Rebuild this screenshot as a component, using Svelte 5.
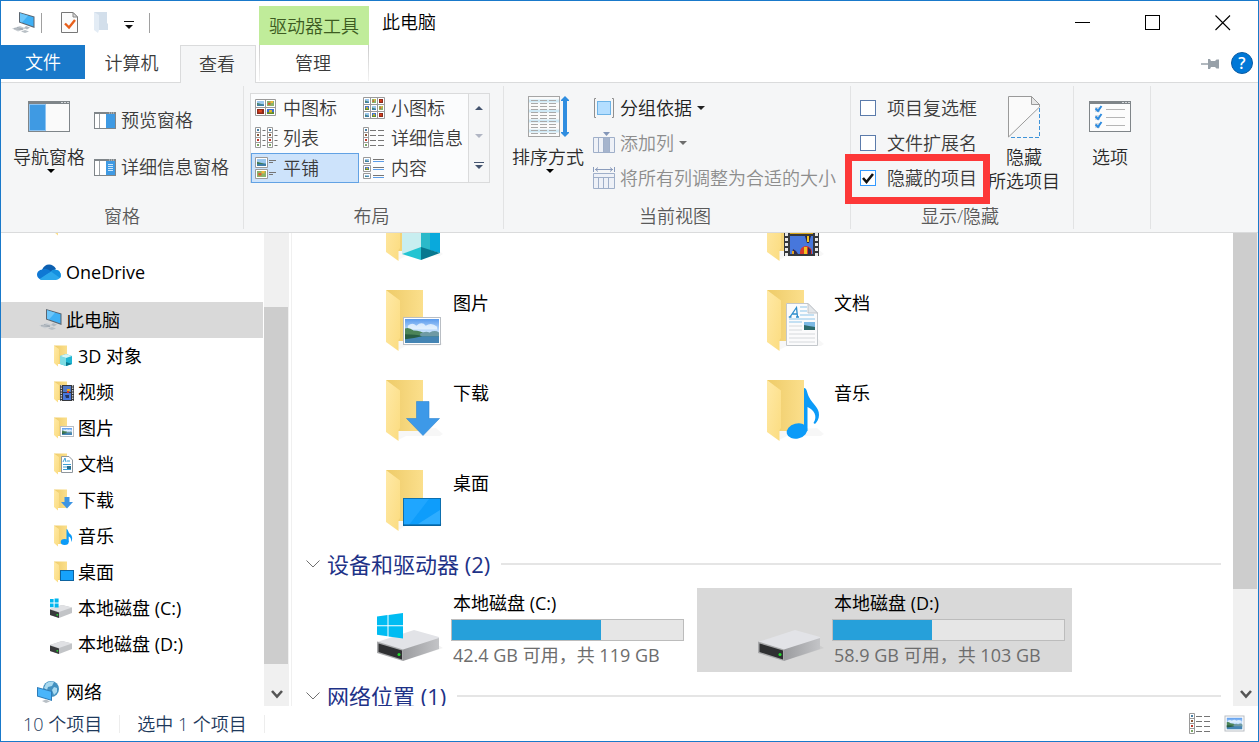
<script>
  const layouts = [
    { name: '中图标', kind: 'medium' },
    { name: '小图标', kind: 'small' },
    { name: '列表', kind: 'list' },
    { name: '详细信息', kind: 'details' },
    { name: '平铺', kind: 'tiles' },
    { name: '内容', kind: 'content' }
  ];
  let layout = $state('tiles');

  let options = $state([
    { name: '项目复选框', on: false },
    { name: '文件扩展名', on: false },
    { name: '隐藏的项目', on: true }
  ]);

  const places = [
    { name: '3D 对象', kind: 'cube' },
    { name: '视频', kind: 'video' },
    { name: '图片', kind: 'picture' },
    { name: '文档', kind: 'document' },
    { name: '下载', kind: 'download' },
    { name: '音乐', kind: 'music' },
    { name: '桌面', kind: 'desktop' },
    { name: '本地磁盘 (C:)', kind: 'system' },
    { name: '本地磁盘 (D:)', kind: 'drive' }
  ];

  const folders = [
    { name: '图片', kind: 'picture' },
    { name: '文档', kind: 'document' },
    { name: '下载', kind: 'download' },
    { name: '音乐', kind: 'music' },
    { name: '桌面', kind: 'desktop' }
  ];

  const drives = [
    { name: '本地磁盘 (C:)', free: 42.4, total: 119, system: true, selected: false },
    { name: '本地磁盘 (D:)', free: 58.9, total: 103, system: false, selected: true }
  ];
</script>

{#snippet thumb(x, y, w, h, v)}
  {#if v === 1}
    <rect {x} {y} width={w} height={h} fill="#8b2a1c" /><rect x={x + w * 0.2} y={y + h * 0.2} width={w * 0.5} height={h * 0.5} fill="#e0431f" />
  {:else if v === 2}
    <rect {x} {y} width={w} height={h} fill="#8bb36a" /><rect x={x + w * 0.15} y={y + h * 0.35} width={w * 0.35} height={h * 0.4} fill="#e05a2b" /><rect x={x + w * 0.5} y={y} width={w * 0.35} height={h * 0.4} fill="#f0b83c" />
  {:else if v === 3}
    <rect {x} {y} width={w} height={h} fill="#3c6fd0" /><rect {x} y={y + h * 0.6} width={w} height={h * 0.4} fill="#5c8c2c" /><rect x={x + w * 0.3} y={y + h * 0.2} width={w * 0.4} height={h * 0.5} fill="#e8b820" />
  {:else}
    <rect {x} {y} width={w} height={h} fill="#9cc8ef" /><rect {x} y={y + h * 0.65} width={w} height={h * 0.35} fill="#3f7fa8" /><path d="M{x} {y + h * 0.4}L{x + w * 0.9} {y + h * 0.7}H{x}z" fill="#3f7a52" />
  {/if}
{/snippet}

{#snippet computer()}
  <svg width="24" height="22" viewBox="0 0 24 22" aria-hidden="true">
    <path d="M7 0L22.500 4.500V16L7 10.500z" fill="#5b6570" />
    <path d="M8 1.300L21.500 5.300V14.600L8 9.700z" fill="#3fb0f5" />
    <path d="M8 1.300L16 3.700L10 10.400L8 9.700z" fill="#6cc6fa" />
    <path d="M14 14l4 1.500-3 2-3-1.500z" fill="#b3bac0" />
    <path d="M0 16.500L8 14l6 2.500-8 3z" fill="#c9ced3" />
    <path d="M2 16.700l9 1M5 15.500l6 1.500" stroke="#98a1a9" stroke-width=".8" fill="none" />
    <path d="M9 19.500l4-1.500 4 1.500-4 1.500z" fill="#b9c0c6" />
  </svg>
{/snippet}

{#snippet landscape(x, y, w, h)}
  <rect {x} {y} width={w} height={h} fill="#fff" stroke="#b9bec4" />
  <svg x={x + 1.500} y={y + 1.500} width={w - 3} height={h - 3} viewBox="0 0 36 25" preserveAspectRatio="none">
    <rect width="36" height="25" fill="url(#sky)" />
    <path d="M3 7q5-4 9 0q6-5 10 0q6-4 12 1v3H3z" fill="#eef7ff" opacity=".8" />
    <path d="M0 10q4-2 9 2q8 0 13 4l14-1v4H0z" fill="#4c8458" />
    <path d="M16 15q6-3 10-1q6-3 10 0v4H16z" fill="#6f9aa4" />
    <rect y="18" width="36" height="7" fill="#4585b4" />
    <path d="M0 16q12 0 18 2q-8 2-18 3z" fill="#285d43" />
  </svg>
{/snippet}

{#snippet driveShape(system)}
  <path d="M40 69L67 60L62 57z" fill="#000" opacity=".05" />
  <path d="M1 54L38 42L63 49L63 51L27 62z" fill="#e2e3e7" />
  <path d="M27 61.500L63 50V61L27 73z" fill="url(#side)" />
  <path d="M1 53.500L27 61.500V73L1 65z" fill="#a8a9ab" />
  <path d="M2.500 55.500L26 62.500V71.500L2.500 64z" fill="#2f3032" />
  <circle cx="23" cy="66.500" r="1.500" fill="#22dd2e" />
  {#if system}
    <path d="M1 28.600L11.500 27V37.200H1zM12.500 26.900L27 25V37.200H12.500zM1 38.200H11.500V48.200L1 46.800zM12.500 38.200H27V50.500L12.500 48.400z" fill="#00bcf2" />
  {/if}
{/snippet}

{#snippet bigIcon(kind)}
  <svg class="big-icon" width="70" height="84" viewBox="0 0 70 84" aria-hidden="true">
    {#if kind === 'system' || kind === 'drive'}
      {@render driveShape(kind === 'system')}
    {:else}
      <path d="M22 62L30 58H64L67 56L60 50L22 52z" fill="#000" opacity=".03" />
      <path d="M10 2H47V53H22z" fill="url(#back)" />
      <path d="M10 2L24 12.500V50L22.500 52V63L10 54z" fill="url(#flap)" />
      {#if kind === 'picture'}
        {@render landscape(27.500, 29.500, 37, 27)}
      {:else if kind === 'document'}
        <path d="M29.500 15.500H51L60.500 25V57.500H29.500z" fill="#fbfbfc" stroke="#c3c7cb" />
        <path d="M51 15.500V25H60.500z" fill="#e4e7ea" stroke="#b8bdc2" stroke-width=".8" />
        <path d="M33 29L39.500 19.500L40.500 29M35.500 26H40.200M31.800 29H34.500M39 29H42" stroke="#2d8dcc" fill="none" stroke-width="1.300" />
        <path d="M43 19H50M43 23H50M43 27H57M32 31H58M32 34H45" stroke="#8dc5ea" />
        <path d="M32 38H45M32 42H45M32 46H58M32 50H58M32 54H58" stroke="#d6d9dc" />
        <rect x="47" y="34" width="11" height="8" fill="#7cb9e4" /><path d="M47 37l5 1 6 1v3H47z" fill="#2d6b6d" />
      {:else if kind === 'download'}
        <path d="M40.500 23.500H53V40.500H63.500L47 57.500L30.500 40.500H40.500z" fill="#3d99e8" stroke="#2f86d4" stroke-width=".6" />
      {:else if kind === 'music'}
        <ellipse cx="40" cy="53" rx="10.500" ry="7.500" transform="rotate(-15 40 53)" fill="#0c9bf8" />
        <path d="M47 10C50 10 50 15 52 19C56 27 62 29 62 37C62 41 60 44 58 46L56.500 45C61 38 57 32 50.500 29V53H47z" fill="#0c9bf8" />
      {:else if kind === 'desktop'}
        <rect x="27.500" y="30.500" width="37" height="27" fill="#0e9dfb" stroke="#0d6fae" />
        <path d="M28 31H53L33 57H28z" fill="#1fa6ff" /><path d="M64 42V56H42z" fill="#2eadff" />
        <path d="M27 57H65" stroke="#075a92" />
      {:else if kind === 'cube'}
        <path d="M26 35L45 30V50L26 56z" fill="#c8eef0" /><path d="M45 30L64 35V55L45 50z" fill="#09a9dc" />
        <path d="M45 30L54 32V52L45 50z" fill="#2bb9c9" />
        <path d="M26 56L45 49V62z" fill="#22c4d2" /><path d="M45 49L64 55L45 62z" fill="#08788f" />
      {:else if kind === 'video'}
        <rect x="27" y="20" width="35" height="38" fill="#36383c" />
        <rect x="33" y="20" width="23" height="16" fill="#187548" /><rect x="33" y="38" width="23" height="18" fill="#4777dc" />
        <path d="M33 33h23v3H33z" fill="#d8a719" />
        <path d="M29.500 20V58M59.500 20V58" stroke="#e8e8e8" stroke-width="3" stroke-dasharray="3 2" />
        <path d="M48 38h6l-2 7h-2z" fill="#27233f" /><path d="M50 38h2v6h-2z" fill="#f2c521" />
        <path d="M43 54a6 6 0 0 1 12 0v2H43z" fill="#d93a2b" /><path d="M47 49h3v7h-3z" fill="#f2c521" /><path d="M51 49l3 3v4h-3z" fill="#302b52" />
        <path d="M36 51l3 2 2 3h-6z" fill="#302b52" /><path d="M35 53h2v3h-2z" fill="#e2a521" />
      {/if}
    {/if}
  </svg>
{/snippet}

{#snippet treeIcon(kind)}
  <svg width="26" height="24" viewBox="0 0 26 24" aria-hidden="true">
    {#if kind === 'system' || kind === 'drive'}
      <path d="M1 13L13 9L23 11.500V17L10 22L1 19z" fill="#c2c4c7" />
      <path d="M1 13L13 9L23 11.500L10 16z" fill="#e0e1e4" />
      <path d="M1 13.500L10 16.500V22L1 19z" fill="#38393b" />
      <circle cx="8.300" cy="18.800" r=".9" fill="#22dd2e" />
      {#if kind === 'system'}
        <path d="M1 3H4.600V6.600H1zM5.600 2.600H9.600V6.600H5.600zM1 7.600H4.600V11.200H1zM5.600 7.600H9.600V11.600H5.600z" fill="#00b6ee" />
      {/if}
    {:else}
      <path d="M5 1.500H18V20H9z" fill="url(#back)" />
      <path d="M5 1.500L10 5V19L9 20V22.500L5 19z" fill="url(#flap)" />
      {#if kind === 'picture'}
        {@render landscape(11.500, 10.500, 13, 10)}
      {:else if kind === 'document'}
        <path d="M12.500 4.500H20L23.500 8V20.500H12.500z" fill="#fff" stroke="#8f969c" />
        <path d="M14 10L16 6L17 10M18 9H21M14 12.500H22M14 15H18M14 17.500H22" stroke="#3d9fd6" fill="none" /><rect x="18" y="14" width="4" height="3" fill="#276e8f" />
      {:else if kind === 'download'}
        <path d="M15.500 9H20.500V14H24L18 20.500L12 14H15.500z" fill="#3d95e4" />
      {:else if kind === 'music'}
        <ellipse cx="15.700" cy="18" rx="4" ry="3" fill="#0c9bf8" />
        <path d="M17.500 5C19 5 19 8 21 10C24 12 23.500 16 22 18C22.500 14 21 13 19.700 12.500V18H17.500z" fill="#0c9bf8" />
      {:else if kind === 'desktop'}
        <rect x="11.500" y="10.500" width="13" height="10" fill="#16a2fb" stroke="#0d639f" />
      {:else if kind === 'cube'}
        <path d="M11 12L17 10L23 12V20L17 22L11 20z" fill="#1fb6d3" /><path d="M11 12L17 14V22L11 20z" fill="#7edce3" /><path d="M11 12L17 10L23 12L17 14z" fill="#d6f5f5" /><path d="M17 18L23 20L17 22z" fill="#08788f" />
      {:else if kind === 'video'}
        <rect x="11" y="5" width="14" height="16" fill="#36383c" /><rect x="14" y="6" width="8" height="6" fill="#4f79c9" /><rect x="14" y="13" width="8" height="7" fill="#4777dc" />
        <path d="M12.300 5V21M23.700 5V21" stroke="#d8d8d8" stroke-dasharray="1.500 1" stroke-width="1.200" /><path d="M18 9h3v2h-3z" fill="#e2a521" /><path d="M16 15h4v3h-3z" fill="#27355e" /><path d="M18 11h2v2h-2z" fill="#c33" />
      {/if}
    {/if}
  </svg>
{/snippet}

{#snippet layoutIcon(kind)}
  <svg width="23" height="22" viewBox="0 0 23 22" aria-hidden="true">
    {#if kind === 'medium'}
      <path d="M.5 2.500H20.500V18.500H.5zM.5 10.500H20.500M10.500 2.500V18.500" fill="#fff" stroke="#9a9a9a" />
      {@render thumb(2, 4, 7, 5, 0)}{@render thumb(12, 4, 7, 5, 2)}{@render thumb(2, 12, 7, 5, 1)}{@render thumb(12, 12, 7, 5, 3)}
    {:else if kind === 'small'}
      <path d="M.5 .5H21.500V21.500H.5zM.5 7.500H21.500M.5 14.500H21.500M7.500 .5V21.500M14.500 .5V21.500" fill="#fff" stroke="#9a9a9a" />
      {#each [0, 1, 2, 3, 4, 5, 6, 7, 8] as n}
        {@render thumb(2 + (n % 3) * 7, 2 + Math.floor(n / 3) * 7, 4, 4, [0, 2, 1, 3, 0, 2, 0, 3, 1][n])}
      {/each}
    {:else if kind === 'list' || kind === 'details'}
      {#each kind === 'list' ? [0, 12] : [0] as x}
        <path d="M{x + 0.5} .5h5v20h-5zM{x + 0.5} 5.500h5M{x + 0.5} 10.500h5M{x + 0.5} 15.500h5" fill="#fff" stroke="#9a9a9a" />
        {#each ['#4a7fa5', '#8a5a3c', '#c0392b', '#7ba564'] as fill, i}
          <rect x={x + 2} y={2 + i * 5} width="2" height="2" {fill} />
        {/each}
      {/each}
      {#if kind === 'list'}
        <path d="M7.500 3.500H10.500M7.500 8.500H10.500M7.500 13.500H10.500M7.500 18.500H10.500M19.500 3.500H22.500M19.500 8.500H22.500M19.500 13.500H22.500M19.500 18.500H22.500" stroke="#757575" />
      {:else}
        <path d="M7 3.500H13M15 3.500H21M7 8.500H13M15 8.500H21M7 13.500H13M15 13.500H21M7 18.500H13M15 18.500H21" stroke="#757575" />
      {/if}
    {:else if kind === 'tiles'}
      <path d="M.5 .5H12.500V10.500H.5zM.5 12.500H12.500V21.500H.5z" fill="#fff" stroke="#9a9a9a" />
      {@render thumb(2, 2, 9, 7, 0)}{@render thumb(2, 14, 9, 6, 2)}
      <path d="M14 3.500H21M14 5.500H18M14 15.500H21M14 17.500H18" stroke="#757575" />
    {:else}
      <path d="M.5 .5H7.500V6.500H.5zM.5 8.500H7.500V14.500H.5zM.5 16.500H7.500V21.500H.5z" fill="#fff" stroke="#9a9a9a" />
      {@render thumb(2, 2, 4, 3, 0)}{@render thumb(2, 10, 4, 3, 3)}{@render thumb(2, 18, 4, 2, 0)}
      <path d="M10 2.500H21M10 10.500H21M10 18.500H21" stroke="#757575" /><path d="M10 4.500H21M10 12.500H21M10 20.500H21" stroke="#5c9de8" />
    {/if}
  </svg>
{/snippet}

{#snippet caret()}
  <svg class="caret" width="8" height="4" viewBox="0 0 8 4" aria-hidden="true"><path d="M0 0H8L4 4z" fill="currentColor" /></svg>
{/snippet}

{#snippet paneIcon(lines)}
  <svg width="22" height="17" viewBox="0 0 22 17" aria-hidden="true">
    <rect x=".5" y=".5" width="21" height="16" fill="#fff" stroke="#7f8589" />
    <path d="M0 1H22" stroke="#7f8589" stroke-width="2" /><path d="M15 1H20" stroke="#d5d8da" stroke-dasharray="1 1" />
    <path d="M5.500 2V16" stroke="#9ba0a4" /><rect x="12" y="2" width="9" height="14" fill="#3f9ae3" />
    {#if lines}<path d="M14 5.500H19M14 7.500H19M14 9.500H19M14 11.500H19" stroke="#cbe5fa" />{/if}
  </svg>
{/snippet}

{#snippet scrollArrow()}
  <svg width="12" height="9" viewBox="0 0 12 9" aria-hidden="true"><path d="M1 1L6 6.500L11 1" fill="none" stroke="#555" stroke-width="2.600" /></svg>
{/snippet}

<svg class="defs" width="0" height="0" aria-hidden="true">
  <defs>
    <linearGradient id="back"><stop offset="0" stop-color="#eecb68" /><stop offset="1" stop-color="#fbdf8c" /></linearGradient>
    <linearGradient id="flap" x2="1" y2="1"><stop offset="0" stop-color="#ffe9a6" /><stop offset="1" stop-color="#fbdc80" /></linearGradient>
    <linearGradient id="side"><stop offset="0" stop-color="#9b9c9f" /><stop offset="1" stop-color="#c3c4c7" /></linearGradient>
    <linearGradient id="sky" x2="0" y2="1"><stop offset="0" stop-color="#5a9bed" /><stop offset=".6" stop-color="#d5ebff" /></linearGradient>
  </defs>
</svg>

<div class="window">
  <header>
    <div class="titlebar">
      <div class="quick">
        {@render computer()}
        <i class="bar"></i>
        <button class="q-check" aria-label="属性">
          <svg width="18" height="22" viewBox="0 0 18 22"><path d="M.5 .5H12L16.500 5V20.500H.5z" fill="#fcfcfc" stroke="#777" /><path d="M12 .5V5H16.500z" fill="#ddd" stroke="#888" /><path d="M4 11.500L8 15.500L14 8" fill="none" stroke="#e8601c" stroke-width="2.400" /></svg>
        </button>
        <button class="q-folder" aria-label="新建文件夹">
          <svg width="15" height="22" viewBox="0 0 15 22"><path d="M0 0H13V11L14 12V18H4z" fill="#d3dfeb" /><path d="M0 0L5 3V18L4 21L0 18z" fill="#e3ecf5" /></svg>
        </button>
        <button class="q-more" aria-label="自定义快速访问工具栏">
          <svg width="10" height="8" viewBox="0 0 10 8"><path d="M0 .5H10" stroke="#111" /><path d="M1 4H9L5 8z" fill="#111" /></svg>
        </button>
        <i class="bar"></i>
      </div>
      <div class="context">驱动器工具</div>
      <h1>此电脑</h1>
      <button class="win" aria-label="最小化"><svg width="16" height="16" viewBox="0 0 16 16"><path d="M0 7.500H15" stroke="#000" /></svg></button>
      <button class="win" aria-label="最大化"><svg width="16" height="16" viewBox="0 0 16 16"><rect x=".5" y=".5" width="14" height="14" fill="none" stroke="#000" /></svg></button>
      <button class="win" aria-label="关闭"><svg width="16" height="16" viewBox="0 0 16 16"><path d="M.5 .5L15 15M15 .5L.5 15" stroke="#000" stroke-width="1.100" /></svg></button>
    </div>
    <nav class="tabs">
      <button class="file">文件</button>
      <button class="tab">计算机</button>
      <button class="tab active">查看</button>
      <button class="tab manage">管理</button>
      <span class="grow"></span>
      <button class="pin" aria-label="固定功能区"><svg width="18" height="12" viewBox="0 0 18 12"><path d="M0 6H7" stroke="#97a0a8" stroke-width="1.500" /><path d="M7 1H9L10 3H14L15.500 1.500H18V10.500H15.500L14 9H10L9 11H7z" fill="#97a0a8" /></svg></button>
      <button class="help" aria-label="帮助">?</button>
    </nav>
  </header>

  <section class="ribbon">
    <div class="group panes">
      <div class="tools">
        <button class="large">
          <svg width="42" height="31" viewBox="0 0 42 31" aria-hidden="true"><rect x=".5" y=".5" width="41" height="30" fill="#fafafa" stroke="#7f8589" /><path d="M0 1.500H42" stroke="#7f8589" stroke-width="3" /><path d="M33 1.500H41" stroke="#d5d8da" stroke-dasharray="2 1" /><rect x="1" y="3" width="17" height="27" fill="#8cc3f2" /><rect x="2" y="4" width="15" height="25" fill="#3f9ae3" /></svg>
          <span>导航窗格</span>
          {@render caret()}
        </button>
        <div class="stack wide-gap">
          <button class="small">{@render paneIcon(false)}<span>预览窗格</span></button>
          <button class="small">{@render paneIcon(true)}<span>详细信息窗格</span></button>
        </div>
      </div>
      <h2>窗格</h2>
    </div>

    <div class="group layout">
      <div class="tools">
        <div class="gallery">
          <div class="cells">
            {#each layouts as item}
              <button class="cell" class:chosen={layout === item.kind} onclick={() => (layout = item.kind)}>
                {@render layoutIcon(item.kind)}<span>{item.name}</span>
              </button>
            {/each}
          </div>
          <div class="spin">
            <button aria-label="上一行"><svg width="8" height="4" viewBox="0 0 8 4"><path d="M4 0L8 4H0z" fill="#44546f" /></svg></button>
            <button aria-label="下一行"><svg width="8" height="4" viewBox="0 0 8 4"><path d="M0 0H8L4 4z" fill="#b1b6c4" /></svg></button>
            <button aria-label="更多"><svg width="10" height="8" viewBox="0 0 10 8"><path d="M0 .5H10" stroke="#44546f" /><path d="M1 3H9L5 7z" fill="#44546f" /></svg></button>
          </div>
        </div>
      </div>
      <h2>布局</h2>
    </div>

    <div class="group view">
      <div class="tools">
        <button class="large tall">
          <svg width="41" height="42" viewBox="0 0 41 42" aria-hidden="true">
            <rect x=".5" y=".5" width="31" height="40" fill="#fafafa" stroke="#a5a5a5" />
            <path d="M1 5H31M1 15H31M1 25H31M1 35H31" stroke="#cfe9f6" stroke-width="3" />
            <path d="M3 4.500H29M3 7.500H29M3 10.500H29M3 13.500H29M3 16.500H29M3 19.500H29M3 22.500H29M3 25.500H29M3 28.500H29M3 31.500H29M3 34.500H29M3 37.500H29" stroke="#a9a9a9" stroke-dasharray="7 2" />
            <path d="M37 0L41 4V5H39V36H41V37L37 41L33 37V36H35V5H33V4z" fill="#2f8de0" />
          </svg>
          <span>排序方式</span>
          {@render caret()}
        </button>
        <div class="stack">
          <button class="small dark">
            <svg width="22" height="20" viewBox="0 0 22 20" aria-hidden="true"><path d="M3 .5H1.500V19.500H3M19 .5H20.500V19.500H19" fill="none" stroke="#8f8f8f" /><rect x="4.500" y="3.500" width="13" height="13" fill="#b4deff" stroke="#6db3e6" /></svg>
            <span>分组依据</span>{@render caret()}
          </button>
          <button class="small" disabled>
            <svg width="22" height="22" viewBox="0 0 22 22" aria-hidden="true"><path d="M.5 5.500H21.500V20.500H.5zM5.500 5.500V20.500M10.500 5.500V20.500M16.500 5.500V20.500" fill="#eef1f7" stroke="#9fafc9" /><rect x="11" y="6" width="5" height="14" fill="#a5b4cd" /><path d="M10 0H17L13.500 4z" fill="#8396b8" /></svg>
            <span>添加列</span>{@render caret()}
          </button>
          <button class="small" disabled>
            <svg width="22" height="22" viewBox="0 0 22 22" aria-hidden="true"><path d="M.5 0V5M21.500 0V5M2 2.500H20M5 .5L2.500 2.500L5 4.500M17 .5L19.500 2.500L17 4.500" fill="none" stroke="#8a9cbc" /><path d="M.5 6.500H21.500V21.500H.5zM.5 10.500H21.500M5.500 10.500V21.500M10.500 10.500V21.500M15.500 10.500V21.500" fill="#eef1f7" stroke="#9fafc9" /></svg>
            <span>将所有列调整为合适的大小</span>
          </button>
        </div>
      </div>
      <h2>当前视图</h2>
    </div>

    <div class="group visibility">
      <div class="tools">
        <div class="stack checks">
          {#each options as option, i}
            <label class:marked={i === 2}>
              <span class="box">
                <input type="checkbox" bind:checked={option.on} />
                {#if option.on}<svg width="12" height="11" viewBox="0 0 12 11" aria-hidden="true"><path d="M1 5L4.500 9L11 1" fill="none" stroke="#111" stroke-width="2.600" /></svg>{/if}
              </span>
              {option.name}
            </label>
          {/each}
        </div>
        <button class="large tall">
          <svg width="33" height="42" viewBox="0 0 33 42" aria-hidden="true"><path d="M.5 .5H23.500L31.500 8.500V11L.5 41z" fill="#fafafa" stroke="#9a9a9a" /><path d="M23.500 .5V8.500H31.500z" fill="#e6e6e6" stroke="#9a9a9a" /><path d="M31.500 12V41.500H1" fill="none" stroke="#3f93d8" stroke-dasharray="4 2" /></svg>
          <span>隐藏<br />所选项目</span>
        </button>
      </div>
      <h2>显示/隐藏</h2>
    </div>

    <div class="group settings">
      <div class="tools">
        <button class="large">
          <svg width="42" height="31" viewBox="0 0 42 31" aria-hidden="true"><rect x=".5" y=".5" width="41" height="30" fill="#fcfcfc" stroke="#7f8589" /><path d="M0 1.500H42" stroke="#7f8589" stroke-width="3" /><path d="M33 1.500H41" stroke="#d5d8da" stroke-dasharray="2 1" /><path d="M17 8.500H36M17 16.500H36M17 24.500H36" stroke="#b5b5b5" /><path d="M6 6H11V11H6zM6 14H11V19H6zM6 22H11V27H6z" fill="#d5dbe1" /><path d="M6.500 7.500L9 10L12.500 5M6.500 15.500L9 18L12.500 13M6.500 23.500L9 26L12.500 21" stroke="#2c8be0" stroke-width="2" fill="none" /></svg>
          <span>选项</span>
        </button>
      </div>
    </div>
  </section>

  <div class="body">
    <aside>
      <div class="tree">
        <div class="node child cut">{@render treeIcon('folder')}</div>
        <a class="node root" href="#onedrive">
          <svg width="24" height="17" viewBox="0 0 24 17" aria-hidden="true"><path d="M5 6C7-1 16-1.500 19 5L12 10z" fill="#0c5fb0" /><path d="M5.500 5.500C8 4 11 5 14 7.500L4 15.500C-2 14-1 6 5.500 5.500z" fill="#0f78d4" /><path d="M14 7.500C16 5 22 5 23.500 9.500C25 13 22 16 19 16H5C4 16 3 15.500 2.500 15z" fill="#2ba7ec" /><path d="M14 7.500C16 5 22 5 23.500 9.500C24 11 24 13 23 14z" fill="#1590df" /></svg>
          OneDrive
        </a>
        <a class="node root current" href="#pc">{@render computer()}此电脑</a>
        {#each places as place}
          <a class="node child" href="#{place.kind}">{@render treeIcon(place.kind)}{place.name}</a>
        {/each}
        <a class="node root" href="#network">
          <svg width="24" height="22" viewBox="0 0 24 22" aria-hidden="true"><circle cx="14" cy="8" r="8" fill="#4391c0" /><path d="M9 2.500q4-3 8-1.500l-2 4-4 1-1 3-3-2zM17 6l3 1v4l-3 3-2-5z" fill="#a9d9ef" /><path d="M0 6L15 10V20L0 15.500z" fill="#2d7cb8" /><path d="M1 7.300L14 10.800V18.700L1 14.700z" fill="#49b5fb" /><path d="M5 20l4-1.500 4 2-4 1.500z" fill="#b8bfc5" /></svg>
          网络
        </a>
      </div>
      <div class="track side"><div class="thumb"></div><div class="end">{@render scrollArrow()}</div></div>
    </aside>

    <main>
      <div class="content">
        <div class="grid clipped">
          <div class="tile">{@render bigIcon('cube')}</div>
          <div class="tile">{@render bigIcon('video')}</div>
        </div>
        <div class="grid">
          {#each folders as folder}
            <div class="tile">{@render bigIcon(folder.kind)}<div class="info"><p>{folder.name}</p></div></div>
          {/each}
        </div>
        <h3><svg width="14" height="8" viewBox="0 0 14 8" aria-hidden="true"><path d="M.5 .5L7 7L13.500 .5" fill="none" stroke="#707070" /></svg>设备和驱动器 (2)</h3>
        <div class="grid">
          {#each drives as drive}
            <div class="tile" class:selected={drive.selected}>
              {@render bigIcon(drive.system ? 'system' : 'drive')}
              <div class="info">
                <p>{drive.name}</p>
                <div class="usage"><div style:width="{(1 - drive.free / drive.total) * 100}%"></div></div>
                <p class="free">{drive.free} GB 可用，共 {drive.total} GB</p>
              </div>
            </div>
          {/each}
        </div>
        <h3 class="later"><svg width="14" height="8" viewBox="0 0 14 8" aria-hidden="true"><path d="M.5 .5L7 7L13.500 .5" fill="none" stroke="#707070" /></svg>网络位置 (1)</h3>
      </div>
      <div class="track main"><div class="thumb"></div><div class="end">{@render scrollArrow()}</div></div>
    </main>
  </div>

  <footer>
    <span>10 个项目</span><i></i><span>选中 1 个项目</span><i></i>
    <b class="grow"></b>
    <button aria-label="详细信息视图">{@render layoutIcon('details')}</button>
    <button aria-label="大图标视图"><svg width="22" height="18" viewBox="0 0 22 18">{@render landscape(1, 1, 19, 15)}</svg></button>
  </footer>
</div>

<style>
  :global(body) { margin: 0; }
  .window, .window * { box-sizing: border-box; }
  .window {
    height: 100vh;
    display: flex;
    flex-direction: column;
    border: 1px solid #1979ca;
    background: #fff;
    color: #000;
    font: 400 18px/24px "Open Sans", "Noto Sans CJK SC", sans-serif;
    white-space: nowrap;
    overflow: hidden;
  }
  .defs { position: absolute; }
  svg { display: block; flex: none; }
  button { border: 0; background: none; padding: 0; margin: 0; font: inherit; color: inherit; }
  h1, h2, h3, p { margin: 0; font: inherit; }
  a { color: inherit; text-decoration: none; }
  .grow { flex: 1; }

  header, .ribbon, footer { font-weight: 350; }
  .titlebar { display: flex; height: 44px; }
  .quick { display: flex; align-items: center; width: 258px; padding-left: 11px; }
  .bar { width: 1px; height: 20px; margin-left: 5px; background: #a0a0a0; }
  .q-check { margin-left: 19px; }
  .q-folder { margin-left: 15px; }
  .q-more { margin: 4px 10px 0 15px; }
  .context {
    width: 110px; margin-top: 5px; padding-top: 8px;
    background: #c0ec9a; color: #3d5c22; text-align: center;
  }
  h1 { flex: 1; padding: 9px 0 0 13px; }
  .win { width: 70px; display: grid; place-items: center; }

  .tabs { display: flex; height: 37px; align-items: stretch; color: #3b3b3b; }
  .file { width: 84px; height: 34px; background: #1979ca; color: #fff; }
  .tab { width: 95px; padding: 0 2px 2px 0; }
  .tab.active {
    width: 76px; height: 38px; margin-right: 3px; z-index: 1;
    background: #f5f6f7; border: 1px solid #dadbdc; border-bottom: 0;
  }
  .tab.manage {
    width: 110px; height: 36px; padding-bottom: 0;
    border: solid; border-width: 0 1px;
    border-image: linear-gradient(#c8c8c8, #f4f4f4) 1;
  }
  .pin { margin-right: 12px; }
  .help {
    width: 22px; height: 22px; margin: 7px 5px 0 0; border-radius: 50%;
    background: #0078d7; border: 1px solid #0b5ba3; color: #fff;
    font-size: 16px; line-height: 20px; font-weight: 600;
  }

  .ribbon {
    display: flex; height: 151px; flex: none; padding: 3px 0;
    background: #f5f6f7; border: solid #dadbdc; border-width: 1px 0;
    color: #3b3b3b;
  }
  .group { display: flex; flex-direction: column; border-right: 1px solid #e2e3e4; }
  .tools { display: flex; height: 118px; }
  h2 { text-align: center; color: #5a5a5a; padding-right: 4px; }
  .panes h2 { padding: 0; }
  .large { display: flex; flex-direction: column; align-items: center; padding-top: 15px; color: #2b2b2b; }
  .large svg { margin-bottom: 13px; }
  .large.tall { padding-top: 10px; }
  .large.tall svg { margin-bottom: 7px; }
  .large .caret, .large.tall .caret { margin: 0 0 0 4px; color: #000; }
  .stack { display: flex; flex-direction: column; padding-top: 10px; gap: 11px; }
  .stack.wide-gap { padding-top: 22px; gap: 23px; }
  .small { display: flex; align-items: center; gap: 5px; height: 24px; }
  .small.dark { color: #222; }
  .small:disabled { color: #8d8d8d; }
  .small:disabled .caret { color: #6d6d6d; }
  .panes { width: 243px; }
  .panes .tools { padding-left: 12px; gap: 9px; }
  .layout { width: 260px; }
  .layout .tools { padding: 7px 0 0 6px; }
  .view { width: 347px; }
  .view .tools { padding-left: 8px; gap: 9px; }
  .visibility { width: 223px; }
  .visibility .tools { padding-left: 9px; gap: 11px; }
  .settings { width: 77px; }
  .settings .tools { padding-left: 15px; }

  .gallery { display: flex; height: 90px; border: 1px solid #dadbdc; background: #fbfcfd; }
  .cells { display: grid; grid-template-columns: 108px 109px; grid-auto-rows: 30px; margin-top: -1px; }
  .cell { display: flex; align-items: center; gap: 5px; padding-left: 4px; }
  .cell.chosen { background: #cde3fb; border: 1px solid #62a2e4; padding-left: 3px; }
  .spin { width: 21px; display: grid; border-left: 1px solid #dadbdc; background: #f5f6f7; }
  .spin button { display: grid; place-items: center; }

  .checks label { position: relative; display: flex; align-items: center; gap: 11px; height: 24px; }
  .box { display: grid; place-items: center; }
  .box input { grid-area: 1 / 1; appearance: none; width: 16px; height: 16px; margin: 0; background: #fff; border: 1px solid #5b7bab; }
  .box input:checked { border-color: #3399ff; }
  .box svg { grid-area: 1 / 1; z-index: 1; pointer-events: none; }
  .marked::after {
    content: ""; position: absolute; z-index: 2; pointer-events: none;
    inset: -12px -13px -14px -15px; border: 7px solid #fd3838;
  }

  .body { display: flex; flex: 1; min-height: 0; }
  aside { display: flex; width: 291px; border-right: 1px solid #f0f0f0; }
  .tree { flex: 1; overflow: hidden; }
  .node { display: flex; align-items: center; height: 36px; }
  .root { gap: 5px; padding-left: 36px; margin: 12px 1px 12px 0; }
  .root.current { margin-bottom: 0; padding-left: 38px; gap: 3px; background: #d9d9d9; }
  .child { gap: 3px; padding-left: 48px; }
  .cut { height: 9px; align-items: flex-end; padding-bottom: 5px; overflow: hidden; }
  .track { width: 25px; flex: none; display: flex; flex-direction: column; background: #f0f0f0; }
  .track .thumb { flex: 1; margin-right: 1px; background: #cdcdcd; }
  .end { display: grid; place-items: center; height: 24px; }
  .track.side { padding-top: 74px; margin-right: 2px; }
  .side .end { margin-top: 18px; }
  .main .end { margin-top: 93px; }

  main { display: flex; flex: 1; min-width: 0; }
  .content { flex: 1; min-width: 0; overflow: hidden; padding: 0 12px 0 14px; }
  .grid { display: grid; grid-template-columns: repeat(auto-fill, 375px); gap: 6px; padding-left: 10px; }
  .tile { display: flex; height: 84px; padding: 0 7px 0 60px; }
  .grid.clipped { margin-bottom: 6px; }
  .clipped .tile { height: 49px; align-items: flex-end; overflow: hidden; }
  .tile.selected { background: #d9d9d9; }
  .info { flex: 1; padding: 3px 0 0 5px; }
  .info p { padding-left: 2px; }
  .usage { height: 22px; margin: 4px 0 2px; border: 1px solid #bcbcbc; background: #e6e6e6; }
  .usage div { height: 100%; background: #26a0da; }
  .info .free { color: #6d6d6d; }
  h3 {
    display: flex; align-items: center; height: 24px; margin-bottom: 12px;
    font-size: 22px; line-height: 24px; color: #1e3287;
  }
  h3 svg { margin-right: 7px; }
  h3::after { content: ""; flex: 1; height: 2px; margin-left: 11px; background: #e5e5e5; }
  h3.later { margin-top: 12px; }

  footer { display: flex; align-items: center; height: 35px; flex: none; padding: 0 12px 0 22px; color: #1e395b; }
  footer i { width: 1px; height: 18px; margin: 0 17px; background: #ededed; }
  footer button { margin-left: 12px; }
</style>
